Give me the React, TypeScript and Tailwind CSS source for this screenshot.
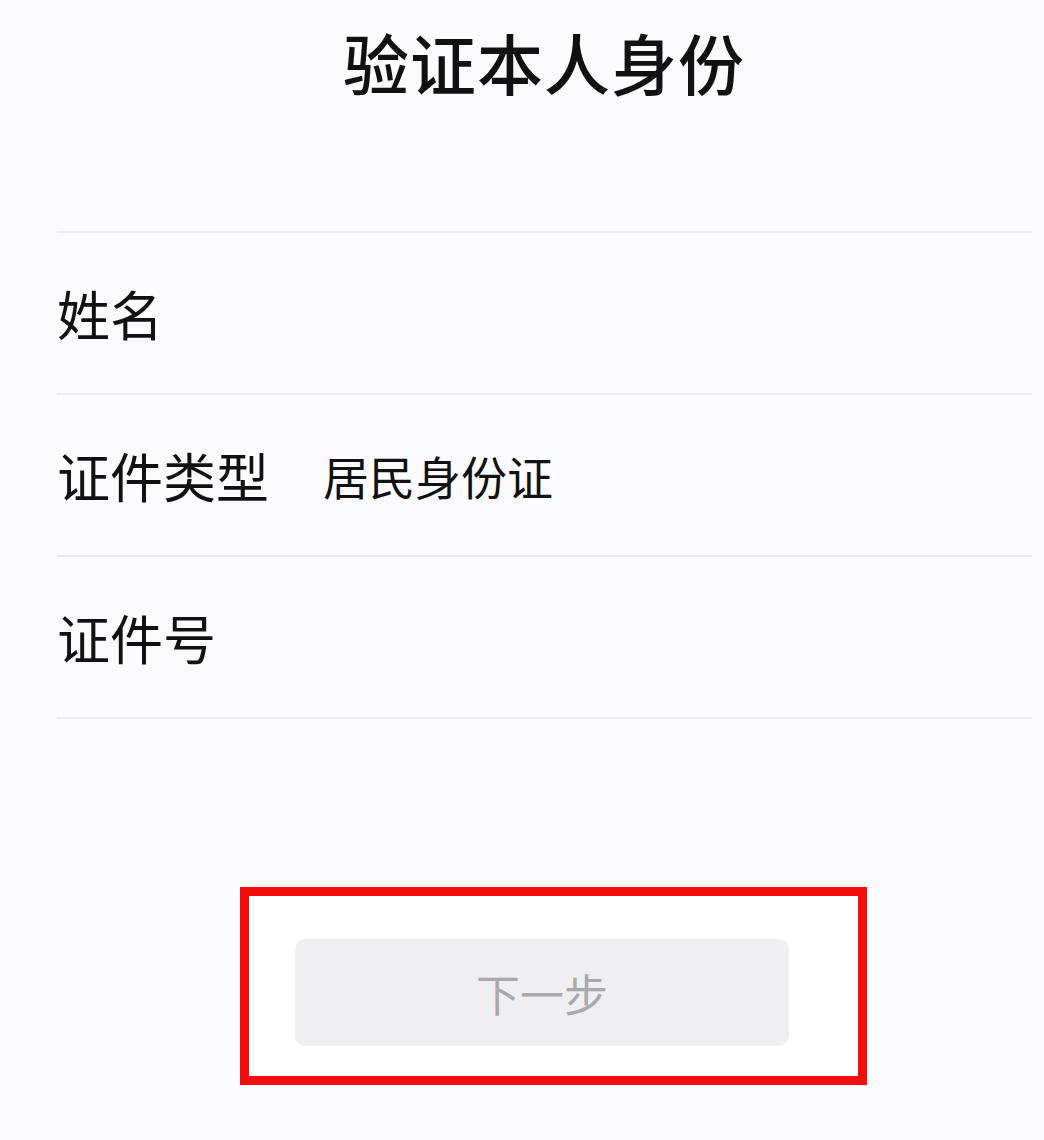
export default function App() {
  const rows: { label: string; value?: string }[] = [
    { label: "姓名" },
    { label: "证件类型", value: "居民身份证" },
    { label: "证件号" },
  ];

  return (
    <div
      className="w-full h-[1140px] overflow-hidden bg-[#fbfbfd] text-[#111111]"
      style={{ fontFamily: '"Noto Sans CJK SC", "Noto Sans", sans-serif' }}
    >
      <div className="w-[1088px]">
        {/* Title */}
        <div className="h-[122px] flex items-center justify-center">
          <h1 className="text-[66px] leading-none font-medium tracking-[1px]">验证本人身份</h1>
        </div>

        {/* Form rows */}
        <div className="mt-[109px] ml-[57px] w-[975px] border-t-2 border-[#ededf0]">
          {rows.map((row) => (
            <div
              key={row.label}
              className="h-[162px] flex items-center border-b-2 border-[#ededf0]"
            >
              <span className="text-[53px] leading-none">{row.label}</span>
              {row.value && (
                <span className="ml-[54px] text-[46px] leading-none">{row.value}</span>
              )}
            </div>
          ))}
        </div>

        {/* Next button, highlighted */}
        <div className="mt-[168px] ml-[240px] w-[627px] h-[198px] border-[9px] border-[#f40d0d] bg-white pl-[46px] pt-[43px]">
          <button
            type="button"
            disabled
            className="w-[494px] h-[107px] rounded-[10px] bg-[#efeff1] text-[#a9a9ab] text-[44px] leading-none flex items-center justify-center"
          >
            下一步
          </button>
        </div>
      </div>
    </div>
  );
}
